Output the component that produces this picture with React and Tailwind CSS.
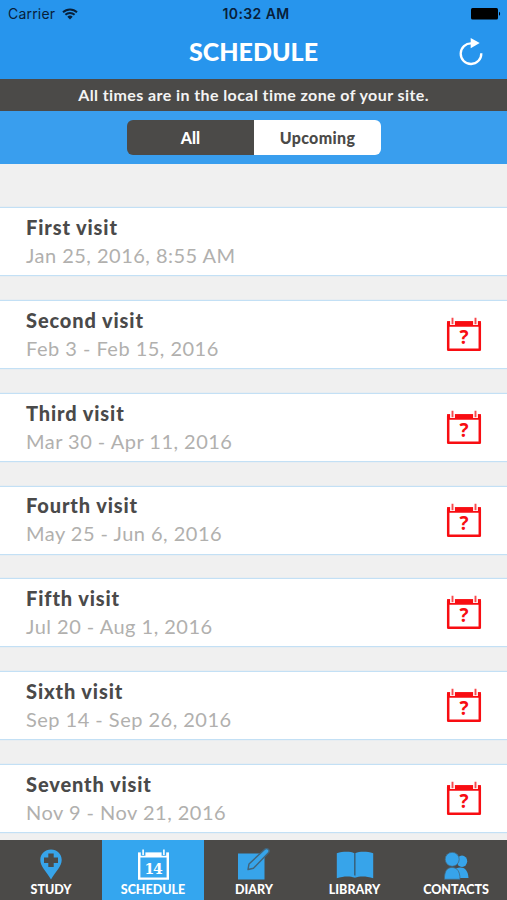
const visits = [
  { name: 'First visit', date: 'Jan 25, 2016, 8:55 AM', pending: false },
  { name: 'Second visit', date: 'Feb 3 - Feb 15, 2016', pending: true },
  { name: 'Third visit', date: 'Mar 30 - Apr 11, 2016', pending: true },
  { name: 'Fourth visit', date: 'May 25 - Jun 6, 2016', pending: true },
  { name: 'Fifth visit', date: 'Jul 20 - Aug 1, 2016', pending: true },
  { name: 'Sixth visit', date: 'Sep 14 - Sep 26, 2016', pending: true },
  { name: 'Seventh visit', date: 'Nov 9 - Nov 21, 2016', pending: true },
];

const tabs = [
  { label: 'STUDY', Icon: StudyIcon },
  { label: 'SCHEDULE', Icon: ScheduleIcon, active: true },
  { label: 'DIARY', Icon: DiaryIcon },
  { label: 'LIBRARY', Icon: LibraryIcon },
  { label: 'CONTACTS', Icon: ContactsIcon },
];

function WifiIcon() {
  return (
    <svg width="16" height="12" viewBox="0 0 16 12" fill="none" stroke="#08203a" strokeWidth="1.9">
      <path d="M1 4.3a10 10 0 0 1 14 0" />
      <path d="M3.4 6.8a6.6 6.6 0 0 1 9.2 0" />
      <path d="M8 11.5 5.3 8.8a3.9 3.9 0 0 1 5.4 0z" fill="#08203a" stroke="none" />
    </svg>
  );
}

function BatteryIcon() {
  return (
    <svg width="30" height="12" viewBox="0 0 30 12" fill="#000">
      <rect x="0" y="0" width="27" height="11.5" rx="1.5" />
      <path d="M28 3.8c1.5.5 1.5 3.5 0 4z" />
    </svg>
  );
}

function RefreshIcon() {
  return (
    <svg width="24" height="28" viewBox="0 0 24 28" fill="none">
      <path d="M12.5 5.4A10.3 10.3 0 1 0 22.3 15.3" stroke="#fff" strokeWidth="2.3" />
      <path d="M11.7 0v10.2l9-5.1z" fill="#fff" />
    </svg>
  );
}

// Marks a visit that has no confirmed appointment yet
function PendingIcon() {
  return (
    <svg width="36" height="35" viewBox="0 0 36 35">
      <path d="M2.2 5.5h31.6v27.3H2.2z" fill="none" stroke="#f80d12" strokeWidth="2.5" strokeLinejoin="round" />
      <path d="M1 4.3h34v5.4H1z" fill="#f80d12" />
      <path d="M4.1 2h4.8v6H4.1zM27.1 2h4.800v6h-4.800z" fill="#fff" />
      <path d="M6.5.8v6.4M29.500.8v6.400" stroke="#f8484c" strokeWidth="1.9" />
      <text x="18" y="26.5" textAnchor="middle" className="font-['Open_Sans'] text-[19px] font-bold" fill="#f80d12">?</text>
    </svg>
  );
}

function StudyIcon() {
  return (
    <svg width="22" height="31" viewBox="0 0 22 31">
      <path d="M11 .5C5 .5.3 5 .3 11 .3 17.5 6 22 11 30.5 16 22 21.7 17.5 21.7 11 21.7 5 17 .5 11 .5z" fill="#37a4ea" />
      <path d="M8.300 4.500h5.400v4h4.300v5.400h-4.300v4H8.300v-4H4V8.500h4.300z" fill="#4b4a48" />
    </svg>
  );
}

function ScheduleIcon() {
  return (
    <svg width="33" height="31" viewBox="0 0 33 31">
      <path d="M2.2 5h28.6v24.6H2.2z" fill="none" stroke="#fff" strokeWidth="2.4" />
      <path d="M1 3.5h31v5H1z" fill="#fff" />
      <path d="M3.8 1.5h4.600v5.300H3.800zM24.600 1.500h4.600v5.300h-4.600z" fill="#34a6ef" />
      <path d="M6.100.5v5.600M26.900.5v5.600" stroke="#fff" strokeWidth="1.6" />
      <text x="16" y="24.5" textAnchor="middle" className="font-['DejaVu_Serif'] text-[14px] font-bold tracking-[-1.2px]" fill="#fff">14</text>
    </svg>
  );
}

function DiaryIcon() {
  return (
    <svg width="34" height="32" viewBox="0 0 34 32">
      <path d="M1 5.500h26.500V31.500H1z" fill="#37a4ea" />
      <path d="M11 21.500 12 16 27.500 1.500c1.500-1.200 3-1 4 0s.8 2.300-.3 3.400L16.500 20.200z" fill="#37a4ea" stroke="#42647a" strokeWidth="1.4" strokeLinejoin="round" />
    </svg>
  );
}

function LibraryIcon() {
  return (
    <svg width="38" height="29" viewBox="0 0 38 29">
      <path d="M.8 2.300C7 .5 14 .3 18.400 2.300V26.500C14 24.800 7 25 .8 27.300z" fill="#37a4ea" />
      <path d="M19.200 2.300C24 .3 31 .5 37.200 2.300V27.300C31 25 24 24.800 19.200 26.500z" fill="#37a4ea" />
      <path d="M18.800 2.300v22.500" stroke="#35627f" strokeWidth="1.2" />
      <path d="M18.800 24.500v2" stroke="#37a4ea" strokeWidth="1.6" />
    </svg>
  );
}

function ContactsIcon() {
  return (
    <svg width="25" height="28" viewBox="0 0 25 28" fill="#37a4ea">
      <ellipse cx="18" cy="9.3" rx="5.2" ry="5.7" />
      <path d="M12 16.500c6-2.500 12-.5 12.500 9.500H14z" />
      <circle cx="8.200" cy="7.300" r="7" stroke="#46687e" strokeWidth=".8" />
      <path d="M.4 27.300C.4 19 3 15.500 8 15.500s8 3.500 8 11.800z" stroke="#46687e" strokeWidth=".8" />
    </svg>
  );
}

function VisitRow({ visit }) {
  return (
    <li className="flex h-[69px] shrink-0 items-center justify-between border-y-[1.5px] border-[#c3e0f5] bg-white pr-[25px] pl-[26px] shadow-[0_0_1px_#c3e0f5]">
      <div className="relative -top-[0.55px] whitespace-nowrap">
        <h2 className="text-[20px] leading-7 font-black tracking-[0.88px] text-[#4a4a4a]">{visit.name}</h2>
        <p className="text-[20px] leading-7 tracking-[0.48px] text-[#b1b0ae]">{visit.date}</p>
      </div>
      {visit.pending && <PendingIcon />}
    </li>
  );
}

export default function App() {
  return (
    <div className="flex h-[900px] w-[507px] flex-col overflow-hidden bg-[#f0f0f0] font-['Lato',sans-serif]">
      <header className="h-[79px] shrink-0 bg-[#2795ed]">
        <div className="grid h-[27px] grid-cols-3 items-center pr-[6px] pl-2 font-['Inter',sans-serif] text-[14px] text-[#08203a]">
          <div className="flex items-center gap-[7px]">
            <span className="tracking-[0.2px]">Carrier</span>
            <WifiIcon />
          </div>
          <span className="pl-[3px] text-center font-semibold tracking-[0.4px]">10:32 AM</span>
          <div className="flex justify-end"><BatteryIcon /></div>
        </div>
        <div className="grid h-[50px] grid-cols-[60px_1fr_60px] items-center">
          <h1 className="col-start-2 text-center text-[25px] font-black text-white">SCHEDULE</h1>
          <button className="pl-[12px]"><RefreshIcon /></button>
        </div>
      </header>

      <div className="flex h-[32px] shrink-0 items-center justify-center bg-[#4b4a48] text-[16px] font-bold tracking-[0.41px] text-[#f4f4f4]">
        All times are in the local time zone of your site.
      </div>

      <div className="flex h-[53px] shrink-0 items-center justify-center bg-[#399eee]">
        <div className="relative left-[0.5px] grid h-[35px] w-[254px] grid-cols-2 overflow-hidden rounded-md text-[16px] font-black">
          <button className="bg-[#4b4a48] text-white">All</button>
          <button className="bg-white tracking-[0.35px] text-[#4b4a48]">Upcoming</button>
        </div>
      </div>

      <ul className="flex min-h-0 flex-1 flex-col gap-[23.85px] overflow-hidden pt-[43px]">
        {visits.map((visit) => (
          <VisitRow key={visit.name} visit={visit} />
        ))}
      </ul>

      <nav className="grid h-[60px] shrink-0 grid-cols-[102px_102px_100px_101px_102px] bg-[#4b4a48]">
        {tabs.map(({ label, Icon, active }) => (
          <button key={label} className={`flex flex-col items-center ${active ? 'bg-[#34a6ef]' : ''}`}>
            <span className="flex h-[41px] items-end pb-[1px]"><Icon /></span>
            <span className="text-[12.5px] leading-[18px] font-black text-white">{label}</span>
          </button>
        ))}
      </nav>
    </div>
  );
}
